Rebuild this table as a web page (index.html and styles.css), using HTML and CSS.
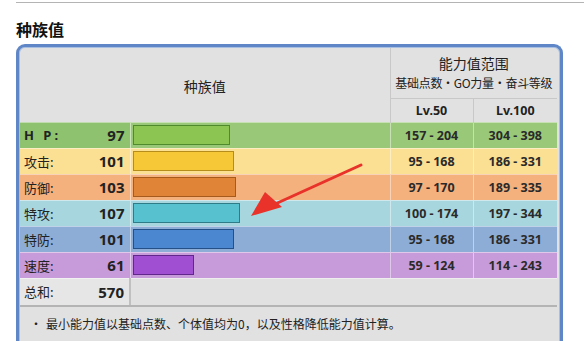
FILE: index.html
```html
<!DOCTYPE html>
<html lang="zh">
<head>
<meta charset="utf-8">
<link rel="stylesheet" href="styles.css">
</head>
<body>
<div class="page">
  <div class="rule"></div>
  <h2 class="title">种族值</h2>
  <div class="box">
    <table class="stats">
      <colgroup>
        <col class="c-name"><col class="c-val"><col class="c-bar"><col class="c-lv50"><col class="c-lv100">
      </colgroup>
      <thead>
        <tr class="h1">
          <th colspan="3" rowspan="2" class="h-main">种族值</th>
          <th colspan="2" class="h-range"><div class="big">能力值范围</div><div class="small">基础点数・GO力量・奋斗等级</div></th>
        </tr>
        <tr class="h2">
          <th class="lv">Lv.50</th>
          <th class="lv">Lv.100</th>
        </tr>
      </thead>
      <tbody>
        <tr class="r hp"><td class="name en">H P:</td><td class="val">97</td><td class="barcell"><div class="bar" style="width:97px"></div></td><td class="rng">157 - 204</td><td class="rng">304 - 398</td></tr>
        <tr class="r atk"><td class="name">攻击:</td><td class="val">101</td><td class="barcell"><div class="bar" style="width:101px"></div></td><td class="rng">95 - 168</td><td class="rng">186 - 331</td></tr>
        <tr class="r def"><td class="name">防御:</td><td class="val">103</td><td class="barcell"><div class="bar" style="width:103px"></div></td><td class="rng">97 - 170</td><td class="rng">189 - 335</td></tr>
        <tr class="r spa"><td class="name">特攻:</td><td class="val">107</td><td class="barcell"><div class="bar" style="width:107px"></div></td><td class="rng">100 - 174</td><td class="rng">197 - 344</td></tr>
        <tr class="r spd"><td class="name">特防:</td><td class="val">101</td><td class="barcell"><div class="bar" style="width:101px"></div></td><td class="rng">95 - 168</td><td class="rng">186 - 331</td></tr>
        <tr class="r spe"><td class="name">速度:</td><td class="val">61</td><td class="barcell"><div class="bar" style="width:61px"></div></td><td class="rng">59 - 124</td><td class="rng">114 - 243</td></tr>
        <tr class="r tot"><td class="name">总和:</td><td class="val">570</td><td class="blank" colspan="3"></td></tr>
      </tbody>
    </table>
    <div class="note"><span class="dot">•</span>最小能力值以基础点数、个体值均为0，以及性格降低能力值计算。</div>
    <svg class="arrow" width="120" height="60" viewBox="0 0 120 60">
      <path d="M112 4 L24 44" stroke="#e8322a" stroke-width="3" stroke-linecap="round" fill="none"/>
      <path d="M2 55 L16 31 L33 46 Z" fill="#e8322a"/>
    </svg>
  </div>
</div>
</body>
</html>
```

FILE: styles.css
```css
html, body { margin: 0; padding: 0; background: #fff; }
body { font-family: "Noto Sans CJK SC", "Noto Sans", sans-serif; color: #222; }
.page { width: 584px; height: 341px; overflow: hidden; }
.rule { margin: 2px 0 0 16px; border-top: 1px solid #b4b4b4; height: 0; }
.title { margin: 15px 0 0 16px; font-size: 16px; line-height: 22px; font-weight: bold; color: #111; }
.box {
  position: relative;
  margin: 4px 0 0 16px;
  width: 539px;
  height: 320px;
  border: 3px solid #5f86c6;
  border-bottom: none;
  border-radius: 9px 9px 0 0;
  background: #e1e1e1;
  box-shadow: inset 0 0 0 1px #a8bfe2;
  padding: 1px 1px 0 1px;
}
.stats { border-collapse: collapse; width: 537px; table-layout: fixed; }
.c-name { width: 70px; }
.c-val { width: 40px; }
.c-bar { width: 260px; }
.c-lv50 { width: 83px; }
.c-lv100 { width: 84px; }
th { font-weight: normal; padding: 0; color: #222; }
.h1 { height: 50px; }
.h2 { height: 24px; }
.h-main { font-size: 14px; padding-top: 2px; border-right: 1px solid #c8c8c8; }
.h-range { border-bottom: 1px solid #c8c8c8; }
.h-range .big { font-size: 14px; line-height: 20px; margin-top: 1px; }
.h-range .small { font-size: 12px; line-height: 20px; letter-spacing: -0.3px; white-space: nowrap; }
.lv { font-family: "Noto Sans", sans-serif; font-weight: bold; font-size: 12.5px; border-left: 1px solid #c8c8c8; }
.lv:first-child { border-left: none; border-right: 1px solid #c8c8c8; }
.r td { padding: 0; height: 25px; border-top: 1px solid rgba(255,255,255,0.45); }
.r .name { font-size: 13px; padding-left: 4px; color: #222; }
.r .name.en { font-family: "Noto Sans", sans-serif; font-weight: bold; letter-spacing: 3px; font-size: 13px; }
.r .val { font-family: "Noto Sans", sans-serif; font-weight: bold; font-size: 15px; text-align: right; padding-right: 5px; color: #222; }
.barcell { border-left: 1px solid rgba(255,255,255,0.5); padding-left: 2px !important; }
.bar { height: 20px; box-sizing: border-box; border: 1px solid rgba(0,0,0,0.45); }
.rng { font-family: "Noto Sans", sans-serif; font-weight: bold; font-size: 12.5px; text-align: center; color: #2a2a2a; border-left: 1px solid rgba(255,255,255,0.45); }
.hp td { background: #99c879; }
.hp .name, .hp .val { background: #8fc26e; }
.hp .bar { background: #8cc552; border-color: #4f8a2c; }
.atk td { background: #fbdf93; }
.atk .bar { background: #f6c838; border-color: #b68d1b; }
.def td { background: #f4b07d; }
.def .bar { background: #e08537; border-color: #a65b1d; }
.spa td { background: #a7d6de; }
.spa .bar { background: #57c1cf; border-color: #2e7c88; }
.spd td { background: #8dadd6; }
.spd .bar { background: #4b87d1; border-color: #244f87; }
.spe td { background: #c79bd9; }
.spe .bar { background: #a04fd3; border-color: #62278a; }
.tot td { background: #e1e1e1; height: 26px; border-bottom: 2px solid #b4b4b4; }
.tot .name, .tot .val { background: #e6e6e6; }
.tot .blank { border-left: 2px solid #c0c0c0; }
.note { font-size: 12px; line-height: 16px; padding: 9px 0 0 10px; color: #222; }
.dot { display: inline-block; width: 16px; font-size: 12px; }
.arrow { position: absolute; left: 230px; top: 114px; }
```
